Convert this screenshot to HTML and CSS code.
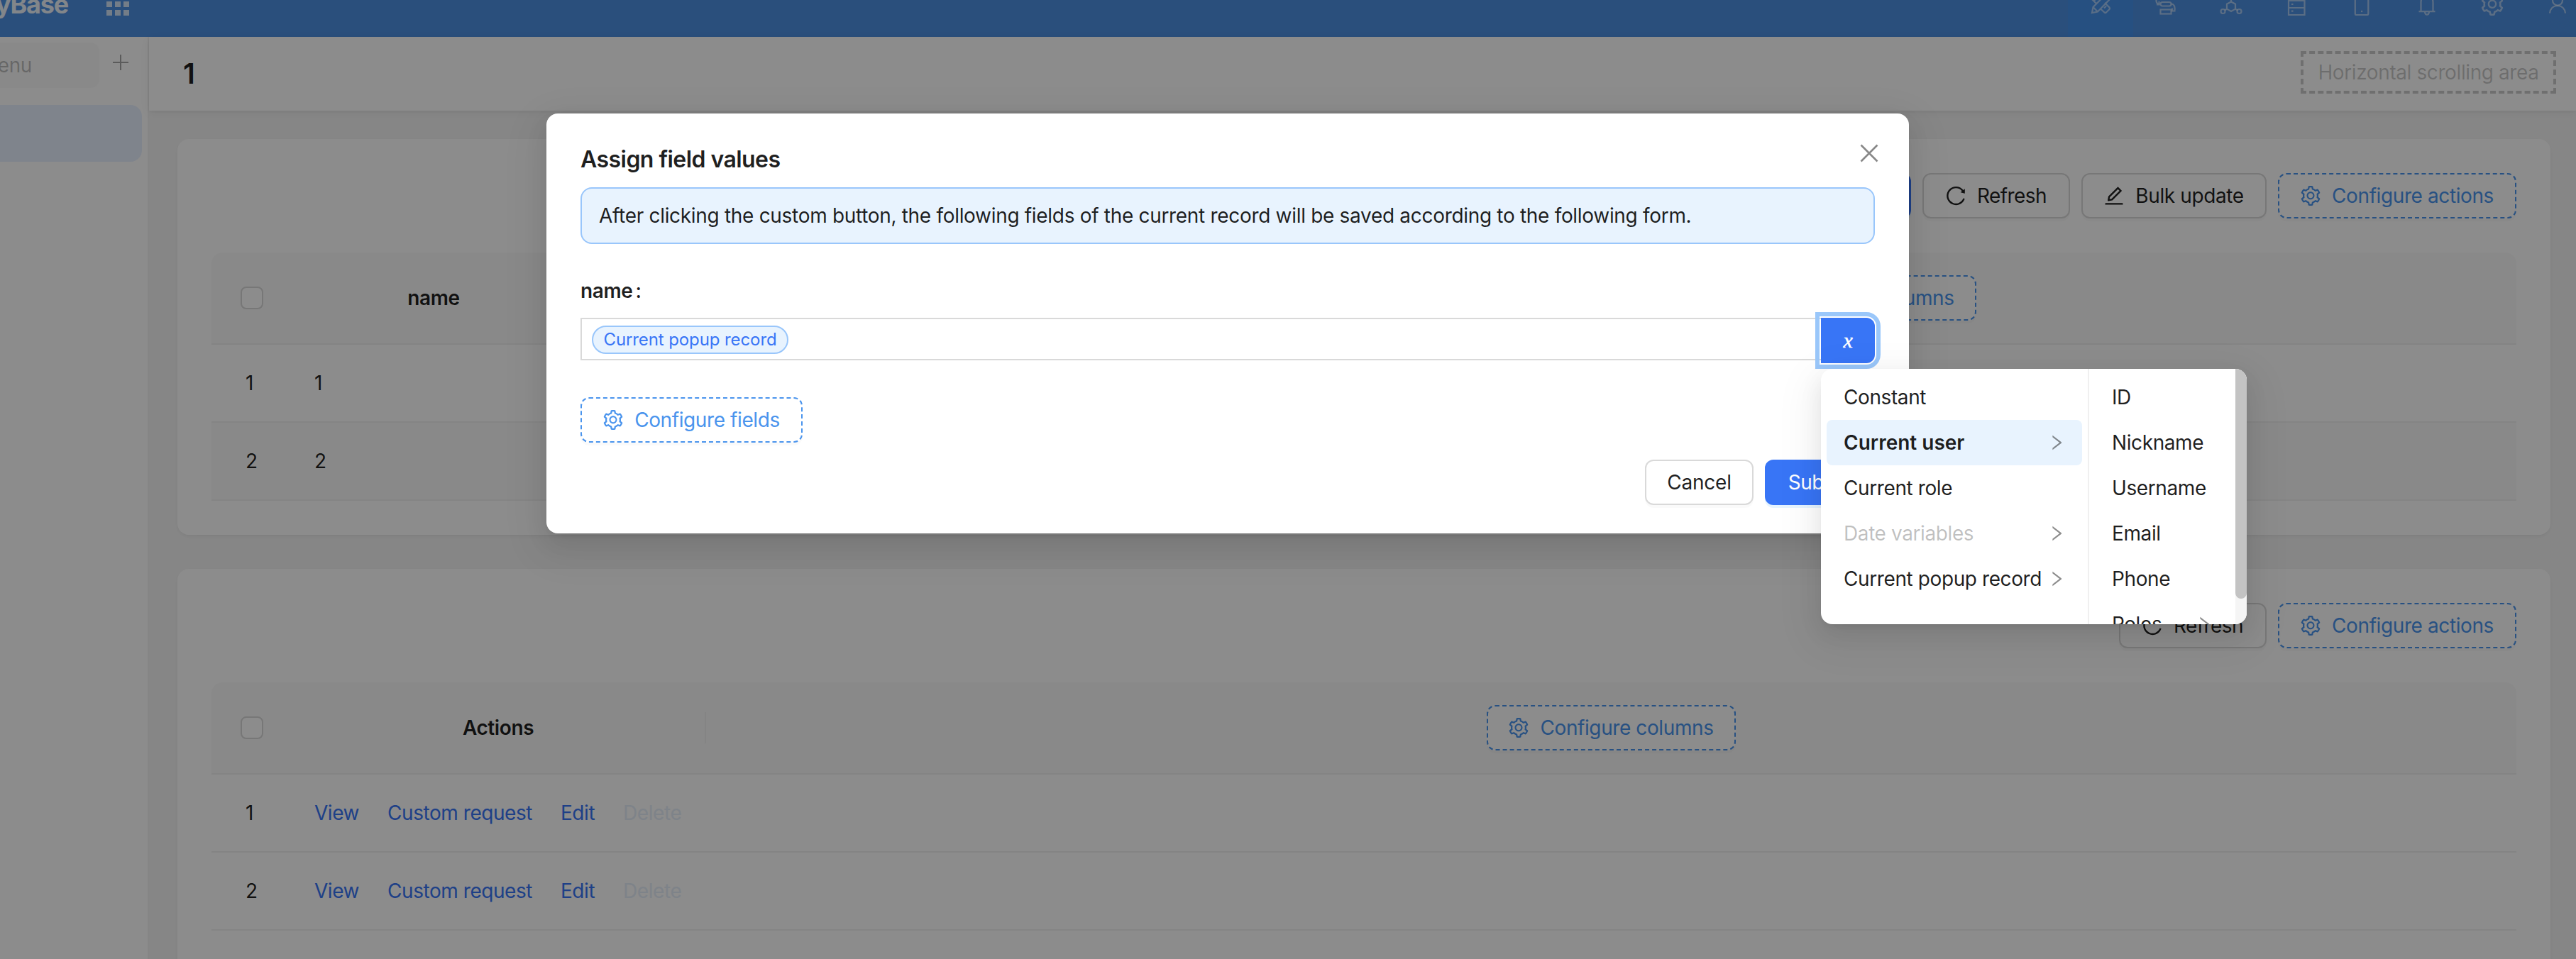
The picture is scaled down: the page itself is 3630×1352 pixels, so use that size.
FILE: index.html
```html
<!DOCTYPE html>
<html lang="en">
<head>
<meta charset="utf-8">
<title>Assign field values</title>
<link rel="stylesheet" href="styles.css">
</head>
<body>
<svg class="sprite" width="0" height="0">
  <symbol id="i-setting" viewBox="64 64 896 896"><path d="M924.8 625.7l-65.5-56c3.1-19 4.7-38.4 4.7-57.8s-1.6-38.8-4.7-57.8l65.5-56a32.03 32.03 0 009.3-35.2l-.9-2.6a443.74 443.74 0 00-79.7-137.9l-1.8-2.1a32.12 32.12 0 00-35.1-9.5l-81.3 28.9c-30-24.6-63.5-44-99.7-57.6l-15.7-85a32.05 32.05 0 00-25.8-25.7l-2.7-.5c-52.1-9.4-106.9-9.4-159 0l-2.7.5a32.05 32.05 0 00-25.8 25.7l-15.8 85.4a351.86 351.86 0 00-99 57.4l-81.9-29.1a32 32 0 00-35.1 9.5l-1.8 2.1a446.02 446.02 0 00-79.7 137.9l-.9 2.6c-4.5 12.5-.8 26.5 9.3 35.2l66.3 56.6c-3.1 18.8-4.6 38-4.6 57.1 0 19.2 1.5 38.4 4.6 57.1L99 625.5a32.03 32.03 0 00-9.3 35.2l.9 2.6c18.1 50.4 44.9 96.9 79.7 137.9l1.8 2.1a32.12 32.12 0 0035.1 9.5l81.9-29.1c29.8 24.5 63.1 43.9 99 57.4l15.8 85.4a32.05 32.05 0 0025.8 25.7l2.7.5a449.4 449.4 0 00159 0l2.7-.5a32.05 32.05 0 0025.8-25.7l15.7-85a350 350 0 0099.7-57.6l81.3 28.9a32 32 0 0035.1-9.5l1.8-2.1c34.8-41.1 61.6-87.5 79.7-137.9l.9-2.6c4.5-12.3.8-26.3-9.3-35zM788.3 465.9c2.5 15.1 3.8 30.6 3.8 46.1s-1.3 31-3.8 46.1l-6.6 40.1 74.7 63.9a370.03 370.03 0 01-42.6 73.6L721 702.8l-31.4 25.8c-23.9 19.6-50.5 35-79.3 45.8l-38.1 14.3-17.9 97a377.5 377.5 0 01-85 0l-17.9-97.2-37.8-14.5c-28.5-10.8-55-26.2-78.7-45.7l-31.4-25.9-93.4 33.2c-17-22.9-31.2-47.6-42.6-73.6l75.5-64.5-6.5-40c-2.4-14.9-3.7-30.3-3.7-45.5 0-15.3 1.2-30.6 3.7-45.5l6.5-40-75.5-64.5c11.3-26.1 25.6-50.7 42.6-73.6l93.4 33.2 31.4-25.9c23.7-19.5 50.2-34.9 78.7-45.7l37.9-14.3 17.9-97.2c28.1-3.2 56.8-3.2 85 0l17.9 97 38.1 14.3c28.7 10.8 55.4 26.2 79.3 45.8l31.4 25.8 92.8-32.9c17 22.9 31.2 47.6 42.6 73.6L781.8 426l6.5 39.9zM512 326c-97.2 0-176 78.8-176 176s78.8 176 176 176 176-78.8 176-176-78.8-176-176-176zm79.2 255.2A111.6 111.6 0 01512 614c-29.9 0-58-11.7-79.2-32.8A111.6 111.6 0 01400 502c0-29.9 11.7-58 32.8-79.2C454 401.6 482.1 390 512 390c29.9 0 58 11.6 79.2 32.8A111.6 111.6 0 01624 502c0 29.9-11.7 58-32.8 79.2z"/></symbol>
  <symbol id="i-reload" viewBox="64 64 896 896"><path d="M909.1 209.3l-56.4 44.1C775.8 155.1 656.2 92 521.9 92 290 92 102.3 279.5 102 511.5 101.7 743.7 289.8 932 521.9 932c181.3 0 335.8-115 394.6-276.1 1.5-4.2-.7-8.9-4.9-10.3l-56.7-19.5a8 8 0 00-10.1 4.8c-1.8 5-3.8 10-5.9 14.9-17.3 41-42.1 77.8-73.7 109.4A344.77 344.77 0 01655.9 829c-42.3 17.9-87.4 27-133.8 27-46.5 0-91.5-9.1-133.8-27A341.5 341.5 0 01279 755.2a342.16 342.16 0 01-73.7-109.4c-17.9-42.4-27-87.4-27-133.9s9.1-91.5 27-133.9c17.3-41 42.1-77.8 73.7-109.4 31.6-31.6 68.4-56.4 109.3-73.8 42.3-17.9 87.4-27 133.8-27 46.5 0 91.5 9.1 133.8 27a341.5 341.5 0 01109.3 73.8c9.9 9.9 19.2 20.4 27.8 31.4l-60.2 47a8 8 0 003 14.1l175.6 43c5 1.2 9.9-2.6 9.9-7.7l.8-180.9c-.1-6.6-7.8-10.3-13-6.2z"/></symbol>
  <symbol id="i-edit" viewBox="64 64 896 896"><path d="M257.7 752c2 0 4-.2 6-.5L431.9 722c2-.4 3.9-1.3 5.3-2.8l423.9-423.9a9.96 9.96 0 000-14.1L694.9 114.9c-1.9-1.9-4.4-2.9-7.1-2.9s-5.2 1-7.1 2.9L256.8 538.8c-1.5 1.5-2.4 3.3-2.8 5.3l-29.5 168.2a33.5 33.5 0 009.4 29.8c6.6 6.4 14.9 9.9 23.8 9.9zm67.4-174.4L687.8 215l73.3 73.3-362.7 362.6-88.9 15.7 15.6-89zM880 836H144c-17.7 0-32 14.3-32 32v36c0 4.4 3.6 8 8 8h784c4.4 0 8-3.6 8-8v-36c0-17.7-14.3-32-32-32z"/></symbol>
  <symbol id="i-right" viewBox="64 64 896 896"><path d="M765.7 486.8L314.9 134.7A7.97 7.97 0 00302 141v77.3c0 4.9 2.3 9.6 6.1 12.6l360 281.1-360 281.1c-3.9 3-6.1 7.7-6.1 12.6V883c0 6.7 7.7 10.4 12.9 6.3l450.8-352.1a31.96 31.96 0 000-50.4z"/></symbol>
</svg>

<div class="app">
  <header class="topbar">
    <div class="topbar-inner">
      <div class="brand">TinyBase</div>
      <svg class="apps" width="32" height="32" viewBox="0 0 32 32"><path d="M0 0h8v8H0zM12 0h8v8h-8zM24 0h8v8h-8zM0 12h8v8H0zM12 12h8v8h-8zM24 12h8v8h-8zM0 24h8v8H0zM12 24h8v8h-8zM24 24h8v8h-8z"/></svg>
      <nav class="tools">
        <a class="tool active"><svg viewBox="0 0 32 32"><path d="M4 28l1.500-8L22 3.500l6.500 6L12 26.500zM11 16L3.500 8.500q-1-1.500 0-2.500l4-4q1.500-1 2.500 0L16 8M22 14l6.500 6.500q1 1.500 0 2.500l-4.500 4.500q-1.500 1-2.500 0L15.500 22M5.500 20l6.500 6.500M24 18.500l-3 3M7 11l3-3"/></svg></a>
        <a class="tool"><svg viewBox="0 0 32 32"><rect x="9" y="2" width="14" height="6"/><rect x="8.500" y="13" width="15" height="5.500" rx="2.700"/><rect x="8.500" y="23.500" width="15" height="6"/><path d="M8 5H4Q2.500 5 2.500 8v3q0 4 4 5M6.500 12v4.500H3M24 15.500q5.500 1 4.500 9M29.500 25.500H25V21.500"/></svg></a>
        <a class="tool"><svg viewBox="0 0 32 32"><path d="M16 12.500l6 3.200v7L16 26l-6-3.300v-7zM16 12.500V7M10 22.700l-3 1.700M22 22.700l3 1.700"/><circle cx="4.500" cy="26" r="3"/><circle cx="27.500" cy="26" r="3"/><circle cx="16" cy="4" r="3"/></svg></a>
        <a class="tool"><svg viewBox="0 0 32 32"><path d="M5 1.500h22.500v29.500H5zM5 11h22.500M5 21h22.500M9 6h2.500M9 16h2.500M9 25.700h2.500"/></svg></a>
        <a class="tool"><svg viewBox="0 0 32 32"><rect x="6.800" y="1.500" width="18.500" height="29.500" rx="1.500"/><path d="M15 26h2.200"/></svg></a>
        <a class="tool"><svg viewBox="0 0 32 32"><path d="M7.500 26V13.500q0-9.500 8.500-9.500t8.500 9.500V26M4.500 26.200h23M13 27q.5 3.700 3 3.700t3-3.700M16 4V1"/></svg></a>
        <a class="tool solid"><svg><use href="#i-setting"/></svg></a>
        <a class="tool"><svg viewBox="0 0 32 32"><circle cx="16" cy="10.500" r="7"/><path d="M5 28.700q1-10.200 11-10.700 10 .5 11 10.700"/></svg></a>
      </nav>
    </div>
  </header>

  <div class="body">
    <aside class="sidebar">
      <div class="search-row">
        <div class="search">Search menu</div>
        <svg class="plus" viewBox="0 0 24 24"><path d="M12 1v22M1 12h22"/></svg>
      </div>
      <div class="menu-active"></div>
    </aside>

    <main class="main">
      <div class="page-head">
        <h1>1</h1>
        <div class="scroll-area"><span>Horizontal scrolling area</span></div>
      </div>

      <section class="card">
        <div class="toolbar">
          <div class="btn primary"></div>
          <div class="btn w-refresh"><svg><use href="#i-reload"/></svg><span>Refresh</span></div>
          <div class="btn w-bulk"><svg><use href="#i-edit"/></svg><span>Bulk update</span></div>
          <div class="btn dashed w-actions"><svg><use href="#i-setting"/></svg><span>Configure actions</span></div>
        </div>
        <div class="table names">
          <div class="tr th"><div class="c-sel"><i class="check"></i></div><div class="c-center">name</div><div></div><div class="c-center"><div class="btn dashed w-columns"><svg><use href="#i-setting"/></svg><span>Configure columns</span></div></div></div>
          <div class="tr"><div class="c-sel">1</div><div class="c-text">1</div></div>
          <div class="tr striped"><div class="c-sel">2</div><div class="c-text">2</div></div>
        </div>
      </section>

      <section class="card">
        <div class="toolbar">
          <div class="btn w-refresh"><svg><use href="#i-reload"/></svg><span>Refresh</span></div>
          <div class="btn dashed w-actions"><svg><use href="#i-setting"/></svg><span>Configure actions</span></div>
        </div>
        <div class="table actions">
          <div class="tr th"><div class="c-sel"><i class="check"></i></div><div class="c-center split">Actions</div><div class="c-center"><div class="btn dashed w-columns"><svg><use href="#i-setting"/></svg><span>Configure columns</span></div></div></div>
          <div class="tr"><div class="c-sel">1</div><div class="c-text links"><a>View</a><a>Custom request</a><a>Edit</a><a class="off">Delete</a></div></div>
          <div class="tr"><div class="c-sel">2</div><div class="c-text links"><a>View</a><a>Custom request</a><a>Edit</a><a class="off">Delete</a></div></div>
          <div class="tr"></div>
        </div>
      </section>
    </main>
  </div>
</div>

<div class="mask"></div>

<div class="modal">
  <svg class="close" viewBox="0 0 26 26"><path d="M1.500 1.500l23 23M24.500 1.500l-23 23"/></svg>
  <h2>Assign field values</h2>
  <div class="alert"><span>After clicking the custom button, the following fields of the current record will be saved according to the following form.</span></div>
  <div class="label">name<b>:</b></div>
  <div class="field">
    <div class="input"><span class="tag">Current popup record</span></div>
    <div class="var-btn">x</div>
  </div>
  <div class="btn dashed w-fields"><svg><use href="#i-setting"/></svg><span>Configure fields</span></div>
  <div class="footer">
    <div class="btn w-cancel">Cancel</div>
    <div class="btn primary w-submit">Submit</div>
  </div>
</div>

<div class="dropdown">
  <div class="menu first">
    <div class="item">Constant</div>
    <div class="item selected">Current user<svg><use href="#i-right"/></svg></div>
    <div class="item">Current role</div>
    <div class="item disabled">Date variables<svg><use href="#i-right"/></svg></div>
    <div class="item">Current popup record<svg><use href="#i-right"/></svg></div>
  </div>
  <div class="menu second">
    <div class="item">ID</div>
    <div class="item">Nickname</div>
    <div class="item">Username</div>
    <div class="item">Email</div>
    <div class="item">Phone</div>
    <div class="item">Roles<svg><use href="#i-right"/></svg></div>
  </div>
  <div class="scrollbar"><div class="thumb"></div></div>
</div>
</body>
</html>
```

FILE: styles.css
```css
* { box-sizing: border-box; }
html, body { margin: 0; height: 1352px; overflow: hidden; }
body {
  position: relative;
  width: 3630px;
  font-family: Inter, "Liberation Sans", sans-serif;
  font-size: 28px;
  line-height: 44px;
  letter-spacing: -0.4px;
  color: rgba(0, 0, 0, 0.88);
  background: #f5f5f5;
}
h1, h2 { margin: 0; font-weight: 600; }
.sprite { position: absolute; }
svg { flex: none; fill: currentColor; }

.app { height: 1352px; overflow: hidden; display: flex; flex-direction: column; }

.topbar { flex: none; height: 52px; overflow: hidden; background: #4e90e2; }
.topbar-inner { height: 92px; margin-top: -40px; display: flex; align-items: center; color: rgba(255, 255, 255, 0.65); }
.brand { width: 96px; display: flex; justify-content: flex-end; font-size: 36px; font-weight: 700; letter-spacing: -1.2px; color: #fff; opacity: 0.9; white-space: nowrap; }
.apps { margin-left: 54px; opacity: 0.75; fill: #fff; }
.tools { display: flex; margin-left: auto; margin-right: -20px; height: 92px; }
.tool { flex: none; width: 92px; display: flex; align-items: center; justify-content: center; color: rgba(255, 255, 255, 0.5); }
.tool svg { width: 32px; height: 32px; fill: none; stroke: currentColor; stroke-width: 2.2; }
.tool.solid svg { fill: currentColor; stroke: none; }
.tool.active { background: #4692ec; }

.body { flex: 1; display: flex; min-height: 0; }
.sidebar { flex: none; width: 210px; background: #fff; border-right: 2px solid #f2f2f2; padding-top: 8px; }
.search-row { display: flex; align-items: center; height: 64px; }
.search { width: 140px; height: 64px; border-radius: 0 12px 12px 0; background: rgba(0, 0, 0, 0.02); display: flex; justify-content: flex-end; align-items: center; padding-right: 95px; white-space: nowrap; color: rgba(0, 0, 0, 0.25); }
.plus { width: 24px; height: 24px; margin: 0 0 8px 18px; fill: none; stroke: rgba(0, 0, 0, 0.35); stroke-width: 2; }
.menu-active { width: 200px; height: 80px; margin-top: 24px; border-radius: 0 16px 16px 0; background: #e8f1ff; }

.main { flex: 1; min-width: 0; display: flex; flex-direction: column; gap: 48px; padding-right: 36px; }
.page-head { flex: none; height: 104px; margin: 0 -36px -8px 0; padding: 0 28px 0 48px; background: #fff; display: flex; align-items: center; justify-content: space-between; box-shadow: 0 2px 4px rgba(0,0,0,.03), 0 2px 12px -2px rgba(0,0,0,.04), 0 4px 16px rgba(0,0,0,.04); }
.page-head h1 { font-size: 40px; }
.scroll-area { width: 360px; height: 60px; margin-bottom: 4px; border: 4px dashed rgba(0, 0, 0, 0.2); display: flex; align-items: center; justify-content: center; color: rgba(0, 0, 0, 0.22); white-space: nowrap; }

.card { flex: none; margin-left: 40px; padding: 48px; border-radius: 16px; background: #fff; box-shadow: 0 2px 4px rgba(0,0,0,.03), 0 2px 12px -2px rgba(0,0,0,.02), 0 4px 8px rgba(0,0,0,.02); }
.toolbar { display: flex; justify-content: flex-end; gap: 16px; margin-bottom: 48px; }
.btn { height: 64px; display: flex; align-items: center; justify-content: center; gap: 16px; border: 2px solid #d9d9d9; border-radius: 12px; background: #fff; box-shadow: 0 4px 0 rgba(0, 0, 0, 0.02); font-weight: 400; white-space: nowrap; }
.btn svg { width: 28px; height: 28px; }
.btn.primary { width: 155px; color: #fff; background: #3875f6; border-color: #3875f6; box-shadow: 0 4px 0 rgba(5, 145, 255, 0.1); }
.btn.dashed { color: #4a94ed; border: 2px dashed #4a94ed; }
.w-refresh { width: 208px; letter-spacing: -0.6px; }
.w-bulk { width: 261px; }
.w-actions { width: 336px; }
.w-columns { width: 351px; }
.w-fields { width: 313px; }
.w-cancel { width: 153px; letter-spacing: -0.2px; }

.tr { display: grid; height: 110px; border-bottom: 2px solid #f0f0f0; align-items: center; }
.names .tr { grid-template-columns: 113px 400px 862px 1fr; }
.actions .tr { grid-template-columns: 113px 584px 1fr; }
.tr.th { height: 130px; background: #fafafa; border-radius: 16px 16px 0 0; font-weight: 600; }
.striped { background: #fafafa; }
.c-sel { padding-left: 48px; }
.th .c-sel { padding-left: 41px; }
.c-center { display: flex; justify-content: center; align-items: center; }
.c-text { padding-left: 32px; }
.split { height: 44px; border-right: 2px solid #f0f0f0; }
.check { display: block; width: 32px; height: 32px; border: 2px solid #d9d9d9; border-radius: 8px; background: #fff; }
.links { display: flex; gap: 40px; color: #3875f6; letter-spacing: -0.45px; }
.links .off { color: #e6eefa; }

.mask { position: absolute; inset: 0; background: rgba(0, 0, 0, 0.45); }

.modal { position: absolute; left: 770px; top: 160px; width: 1920px; height: 592px; padding: 40px 48px; border-radius: 16px; background: #fff; box-shadow: 0 12px 32px rgba(0,0,0,.08), 0 6px 12px -8px rgba(0,0,0,.12), 0 18px 56px 16px rgba(0,0,0,.05); }
.modal h2 { height: 64px; font-size: 32px; line-height: 50px; letter-spacing: -0.55px; }
.close { position: absolute; right: 43px; top: 43px; width: 26px; height: 26px; fill: none; stroke: #888; stroke-width: 2.6; }
.alert { height: 80px; padding: 0 24px; display: flex; align-items: center; border: 2px solid #99c6fb; border-radius: 16px; background: #e8f3fe; white-space: nowrap; letter-spacing: -0.31px; }
.label { margin-top: 44px; height: 60px; font-weight: 600; }
.label b { margin-left: 4px; font-weight: 500; }
.field { display: flex; height: 64px; }
.input { flex: 1; height: 60px; display: flex; align-items: center; padding-left: 14px; border: 2px solid #d9d9d9; border-right: 0; }
.tag { height: 40px; width: 277px; display: flex; align-items: center; justify-content: center; margin-top: 2px; border: 2px solid #99c6fb; border-radius: 20px; background: #e8f3fe; color: #3875f6; font-size: 24px; letter-spacing: -0.1px; white-space: nowrap; }
.var-btn { width: 76px; height: 64px; display: flex; align-items: center; justify-content: center; border-radius: 0 12px 12px 0; background: #3875f6; color: #fff; outline: 6px solid #9ac7fa; outline-offset: 2px; font: italic 400 30px "Liberation Serif", serif; -webkit-text-stroke: 0.5px #fff; }
.modal .w-fields { margin-top: 48px; }
.footer { display: flex; justify-content: flex-end; gap: 16px; margin-top: 24px; }

.dropdown { position: absolute; left: 2566px; top: 520px; width: 600px; height: 360px; display: flex; border-radius: 16px; background: #fff; box-shadow: 0 12px 32px rgba(0,0,0,.08), 0 6px 12px -8px rgba(0,0,0,.12), 0 18px 56px 16px rgba(0,0,0,.05); }
.menu { padding: 8px; height: 360px; overflow: hidden; }
.first { width: 378px; border-right: 2px solid #f0f0f0; }
.second { flex: 1; }
.item { height: 64px; padding: 0 24px; display: flex; align-items: center; justify-content: space-between; border-radius: 8px; white-space: nowrap; }
.item svg { width: 24px; height: 24px; color: rgba(0, 0, 0, 0.45); }
.item.selected { background: #e8f3fe; font-weight: 600; letter-spacing: 0; }
.item.disabled { color: rgba(0, 0, 0, 0.25); }
.scrollbar { width: 16px; background: #f5f5f5; border-radius: 0 16px 16px 0; overflow: hidden; }
.thumb { height: 324px; background: #c3c3c3; border-radius: 0 0 8px 8px; }
```
